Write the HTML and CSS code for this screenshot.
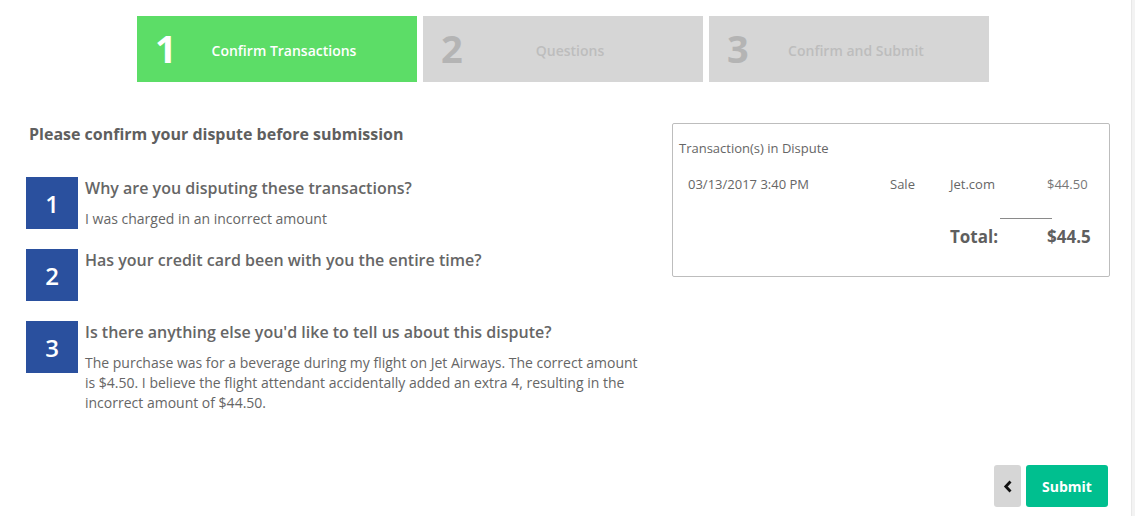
FILE: index.html
```html
<!DOCTYPE html>
<html lang="en">
<head>
<meta charset="utf-8">
<title>Confirm Dispute</title>
<link rel="stylesheet" href="styles.css">
</head>
<body>
<div class="page">
  <div class="main">
    <div class="steps">
      <div class="step step-active">
        <span class="step-num">1</span>
        <span class="step-label">Confirm Transactions</span>
      </div>
      <div class="step">
        <span class="step-num">2</span>
        <span class="step-label">Questions</span>
      </div>
      <div class="step">
        <span class="step-num">3</span>
        <span class="step-label">Confirm and Submit</span>
      </div>
    </div>

    <div class="content">
      <div class="left">
        <h2 class="heading">Please confirm your dispute before submission</h2>
        <div class="qlist">
          <div class="q">
            <div class="qbox">1</div>
            <div class="qtext">
              <div class="qtitle">Why are you disputing these transactions?</div>
              <div class="qans">I was charged in an incorrect amount</div>
            </div>
          </div>
          <div class="q">
            <div class="qbox">2</div>
            <div class="qtext">
              <div class="qtitle">Has your credit card been with you the entire time?</div>
            </div>
          </div>
          <div class="q">
            <div class="qbox">3</div>
            <div class="qtext">
              <div class="qtitle">Is there anything else you'd like to tell us about this dispute?</div>
              <div class="qans">The purchase was for a beverage during my flight on Jet Airways. The correct amount is $4.50. I believe the flight attendant accidentally added an extra 4, resulting in the incorrect amount of $44.50.</div>
            </div>
          </div>
        </div>
      </div>

      <div class="panel">
        <div class="panel-title">Transaction(s) in Dispute</div>
        <div class="tx">
          <div class="tx-date">03/13/2017 3:40 PM</div>
          <div class="tx-type">Sale</div>
          <div class="tx-merchant">Jet.com</div>
          <div class="tx-amount">$44.50</div>
          <div class="tx-rule"></div>
          <div class="tx-total-label">Total:</div>
          <div class="tx-total">$44.5</div>
        </div>
      </div>
    </div>

    <div class="actions">
      <button class="btn-back" type="button" aria-label="Back">
        <svg width="10" height="13" viewBox="0 0 10 13"><polyline points="7.5,1.5 2.8,6.5 7.5,11.5" fill="none" stroke="#111" stroke-width="2.8"/></svg>
      </button>
      <button class="btn-submit" type="button">Submit</button>
    </div>
  </div>
  <div class="edge"></div>
</div>
</body>
</html>
```

FILE: styles.css
```css
html, body {
  margin: 0;
  padding: 0;
  background: #fff;
}

body {
  font-family: "Open Sans", "Liberation Sans", sans-serif;
  color: #666;
}

.page {
  display: flex;
  min-height: 516px;
}

.main {
  flex: 1;
}

.edge {
  width: 3px;
  border-left: 1px solid #e8e8e8;
  background: #f3f3f3;
}

/* steps */
.steps {
  display: flex;
  gap: 6px;
  padding: 16px 0 0 137px;
}

.step {
  width: 280px;
  height: 66px;
  background: #d6d6d6;
  display: grid;
  align-items: center;
}

.step-num,
.step-label {
  grid-area: 1 / 1;
}

.step-num {
  justify-self: start;
  margin-left: 18px;
  font-size: 38px;
  font-weight: 700;
  line-height: 1;
  color: #b4b4b4;
  margin-top: -2px;
}

.step-label {
  justify-self: center;
  margin-left: 14px;
  font-size: 14px;
  font-weight: 600;
  color: #bdbdbd;
  margin-top: 2px;
}

.step-active {
  background: #5cdd67;
}

.step-active .step-num,
.step-active .step-label {
  color: #fff;
}

/* content */
.content {
  display: flex;
  margin-top: 41px;
}

.left {
  width: 619px;
  padding-left: 26px;
}

.heading {
  margin: 0 0 0 3px;
  font-size: 16px;
  font-weight: 700;
  line-height: 22px;
  color: #5f5f5f;
}

.qlist {
  display: flex;
  flex-direction: column;
  gap: 20px;
  margin-top: 32px;
}

.q {
  display: flex;
  gap: 7px;
  align-items: flex-start;
}

.qbox {
  flex: none;
  width: 52px;
  height: 52px;
  background: #2a509e;
  color: #fff;
  font-size: 24px;
  font-weight: 600;
  display: flex;
  align-items: center;
  justify-content: center;
}

.qtext {
  width: 560px;
}

.qtitle {
  font-size: 16px;
  font-weight: 600;
  line-height: 22px;
  color: #666;
}

.qans {
  margin-top: 10px;
  font-size: 14px;
  line-height: 20px;
  color: #666;
}

/* panel */
.panel {
  margin-left: 27px;
  width: 424px;
  border: 1px solid #bdbdbd;
  border-radius: 2px;
  padding: 15px 6px 27px 6px;
  align-self: flex-start;
}

.panel-title {
  font-size: 13px;
  line-height: 18px;
  color: #666;
}

.tx {
  display: grid;
  grid-template-columns: 202px 60px 97px auto;
  margin: 18px 0 0 9px;
  font-size: 13px;
  line-height: 18px;
  color: #666;
}

.tx-amount {
  color: #777;
}

.tx-rule {
  grid-column: 3 / 5;
  margin: 25px 0 0 50px;
  width: 52px;
  height: 1px;
  background: #8a8a8a;
}

.tx-total-label,
.tx-total {
  margin-top: 6px;
  font-size: 17px;
  font-weight: 700;
  line-height: 24px;
  color: #5f5f5f;
}

.tx-total-label {
  grid-column: 3;
}

/* actions */
.actions {
  display: flex;
  justify-content: flex-end;
  gap: 5px;
  margin-top: 52px;
  padding-right: 23px;
}

.btn-back,
.btn-submit {
  height: 42px;
  border: none;
  border-radius: 3px;
  font-family: inherit;
  cursor: pointer;
}

.btn-back {
  width: 27px;
  padding: 0;
  background: #d6d6d6;
  display: flex;
  align-items: center;
  justify-content: center;
}

.btn-submit {
  width: 82px;
  background: #00bf8f;
  color: #fff;
  font-size: 14px;
  font-weight: 700;
}
```
